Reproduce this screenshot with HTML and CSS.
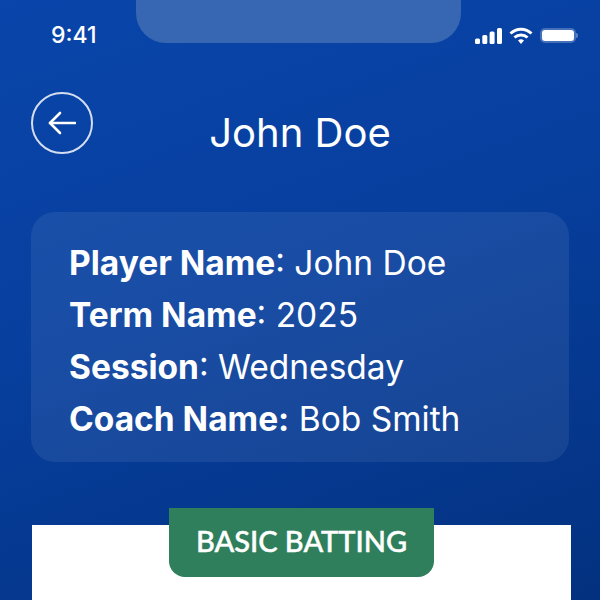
FILE: index.html
```html
<!DOCTYPE html>
<html lang="en">
<head>
    <meta charset="UTF-8">
    <meta name="viewport" content="width=device-width, initial-scale=1.0">
    <title>John Doe</title>
    <link rel="stylesheet" href="styles.css">
</head>
<body>
    <div class="screen">
        <div class="status-bar">
            <span class="time">9:41</span>
            <div class="notch"></div>
            <div class="status-icons">
                <svg width="27" height="16" viewBox="0 0 27 16" fill="#fff">
                    <rect x="0" y="10.5" width="5" height="5.5" rx="1.5"/>
                    <rect x="7.3" y="7" width="5" height="9" rx="1.5"/>
                    <rect x="14.6" y="3.5" width="5" height="12.5" rx="1.5"/>
                    <rect x="22" y="0" width="5" height="16" rx="1.5"/>
                </svg>
                <svg width="24" height="17" viewBox="0 0 24 17" fill="none" stroke="#fff" stroke-width="3">
                    <path d="M1.5 6.5a15 15 0 0 1 21 0"/>
                    <path d="M5.5 10.5a9.5 9.5 0 0 1 13 0"/>
                    <path d="M12 17l-3-3.4a4.4 4.4 0 0 1 6 0z" fill="#fff" stroke="none"/>
                </svg>
                <div class="battery"><div class="battery-level"></div></div>
            </div>
        </div>

        <div class="header">
            <button class="back-button">
                <svg width="28" height="24" viewBox="0 0 28 24" fill="none" stroke="#fff" stroke-width="2.6" stroke-linecap="round" stroke-linejoin="round">
                    <path d="M27 12H2"/>
                    <path d="M12 2L2 12l10 10"/>
                </svg>
            </button>
            <h1 class="title">John Doe</h1>
        </div>

        <div class="info-card">
            <p><b>Player Name</b>: John Doe</p>
            <p><b>Term Name</b>: 2025</p>
            <p><b>Session</b>: Wednesday</p>
            <p><b>Coach Name:</b> Bob Smith</p>
        </div>

        <div class="lesson-card">
            <div class="lesson-tab">BASIC BATTING</div>
        </div>
    </div>
</body>
</html>
```

FILE: styles.css
```css
body {
    margin: 0;
    font-family: 'Inter', sans-serif;
    color: #fff;
}

.screen {
    height: 600px;
    overflow: hidden;
    background: linear-gradient(160deg, #0945aa 0%, #073f9e 45%, #03317f 100%);
}

.status-bar {
    display: flex;
    justify-content: space-between;
    height: 43px;
    padding: 0 22px 0 51px;
}

.time {
    width: 85px;
    margin-top: 21px;
    font-size: 23px;
    font-weight: 500;
    line-height: 28px;
}

.notch {
    width: 327px;
    height: 43px;
    margin-right: 14px;
    border-radius: 0 0 30px 30px;
    background-color: #3767b2;
}

.status-icons {
    display: flex;
    align-items: center;
    gap: 7px;
    height: 17px;
    margin-top: 27px;
}

.battery {
    position: relative;
    width: 32px;
    height: 11px;
    padding: 2px;
    border-radius: 5px;
    background-color: rgba(255, 255, 255, 0.25);
    margin-right: 2px;
}

/* battery nub */
.battery::after {
    content: '';
    position: absolute;
    right: -2px;
    top: 5px;
    width: 2px;
    height: 5px;
    border-radius: 0 2px 2px 0;
    background-color: rgba(255, 255, 255, 0.35);
}

.battery-level {
    height: 100%;
    border-radius: 3px;
    background-color: #fff;
}

.header {
    position: relative;
    display: flex;
    justify-content: center;
    align-items: center;
    height: 62px;
    margin-top: 49px;
}

.back-button {
    position: absolute;
    left: 31px;
    top: 0;
    display: flex;
    justify-content: center;
    align-items: center;
    width: 62px;
    height: 62px;
    padding: 0;
    border: 2px solid #d5deee;
    border-radius: 50%;
    background: none;
}

.title {
    margin: 20px 0 0;
    font-size: 40px;
    font-weight: 400;
    line-height: 46px;
}

.info-card {
    height: 250px;
    box-sizing: border-box;
    margin: 58px 31px 0;
    padding: 24.5px 38px;
    border-radius: 24px;
    background-color: rgba(255, 255, 255, 0.075);
}

.info-card p {
    margin: 0;
    font-size: 33.5px;
    font-weight: 400;
    line-height: 52.3px;
}

.info-card b {
    font-weight: 700;
}

.lesson-card {
    position: relative;
    height: 120px;
    margin: 63px 29px 0 32px;
    background-color: #fff;
}

.lesson-tab {
    position: absolute;
    left: 137px;
    top: -17px;
    width: 265px;
    height: 69px;
    border-radius: 0 0 16px 16px;
    background-color: #2f7f5c;
    font-family: 'Lato', sans-serif;
    font-size: 29px;
    font-weight: 500;
    -webkit-text-stroke: 0.5px #fff;
    line-height: 66px;
    text-align: center;
}
```
